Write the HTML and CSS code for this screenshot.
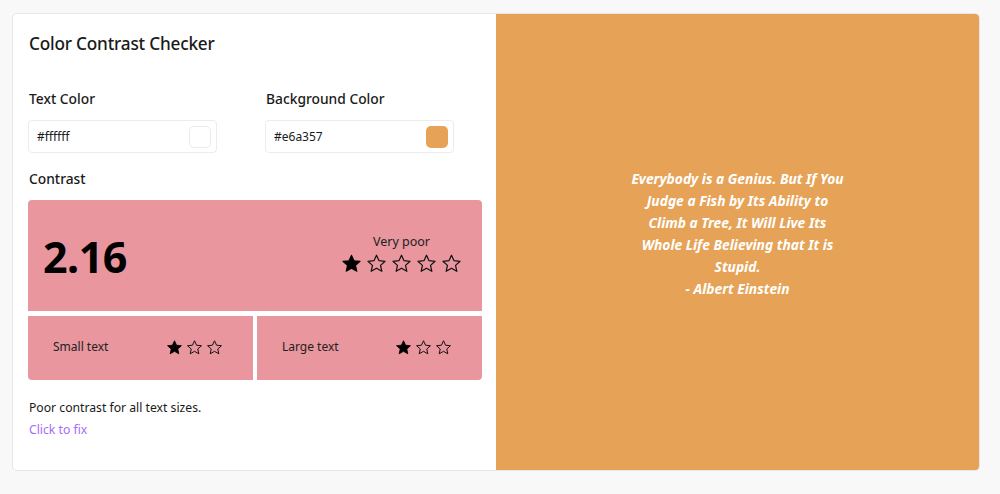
FILE: index.html
```html
<!DOCTYPE html>
<html>
<head>
<meta charset="utf-8">
<link rel="stylesheet" href="styles.css">
</head>
<body>
<div class="card">
  <section class="panel">
    <h1 class="title">Color Contrast Checker</h1>
    <div class="fields">
      <div class="field">
        <label class="label">Text Color</label>
        <div class="input"><span class="val">#ffffff</span><span class="swatch sw-white"></span></div>
      </div>
      <div class="field">
        <label class="label">Background Color</label>
        <div class="input"><span class="val">#e6a357</span><span class="swatch sw-orange"></span></div>
      </div>
    </div>
    <div class="label contrast-label">Contrast</div>
    <div class="score">
      <div class="ratio">2.16</div>
      <div class="rating">
        <div class="rating-text">Very poor</div>
        <div class="stars big">
          <svg viewBox="0 0 24 24"><path class="full" d="M12 2.5l2.9 6.3 6.9.7-5.2 4.6 1.5 6.8L12 17.4l-6.1 3.5 1.5-6.8-5.2-4.6 6.9-.7z"/></svg>
          <svg viewBox="0 0 24 24"><path class="empty" d="M12 2.5l2.9 6.3 6.9.7-5.2 4.6 1.5 6.8L12 17.4l-6.1 3.5 1.5-6.8-5.2-4.6 6.9-.7z"/></svg>
          <svg viewBox="0 0 24 24"><path class="empty" d="M12 2.5l2.9 6.3 6.9.7-5.2 4.6 1.5 6.8L12 17.4l-6.1 3.5 1.5-6.8-5.2-4.6 6.9-.7z"/></svg>
          <svg viewBox="0 0 24 24"><path class="empty" d="M12 2.5l2.9 6.3 6.9.7-5.2 4.6 1.5 6.8L12 17.4l-6.1 3.5 1.5-6.8-5.2-4.6 6.9-.7z"/></svg>
          <svg viewBox="0 0 24 24"><path class="empty" d="M12 2.5l2.9 6.3 6.9.7-5.2 4.6 1.5 6.8L12 17.4l-6.1 3.5 1.5-6.8-5.2-4.6 6.9-.7z"/></svg>
        </div>
      </div>
    </div>
    <div class="sizes">
      <div class="size size-left">
        <span class="size-name">Small text</span>
        <div class="stars small">
          <svg viewBox="0 0 24 24"><path class="full" d="M12 2.5l2.9 6.3 6.9.7-5.2 4.6 1.5 6.8L12 17.4l-6.1 3.5 1.5-6.8-5.2-4.6 6.9-.7z"/></svg>
          <svg viewBox="0 0 24 24"><path class="empty" d="M12 2.5l2.9 6.3 6.9.7-5.2 4.6 1.5 6.8L12 17.4l-6.1 3.5 1.5-6.8-5.2-4.6 6.9-.7z"/></svg>
          <svg viewBox="0 0 24 24"><path class="empty" d="M12 2.5l2.9 6.3 6.9.7-5.2 4.6 1.5 6.8L12 17.4l-6.1 3.5 1.5-6.8-5.2-4.6 6.9-.7z"/></svg>
        </div>
      </div>
      <div class="size size-right">
        <span class="size-name">Large text</span>
        <div class="stars small">
          <svg viewBox="0 0 24 24"><path class="full" d="M12 2.5l2.9 6.3 6.9.7-5.2 4.6 1.5 6.8L12 17.4l-6.1 3.5 1.5-6.8-5.2-4.6 6.9-.7z"/></svg>
          <svg viewBox="0 0 24 24"><path class="empty" d="M12 2.5l2.9 6.3 6.9.7-5.2 4.6 1.5 6.8L12 17.4l-6.1 3.5 1.5-6.8-5.2-4.6 6.9-.7z"/></svg>
          <svg viewBox="0 0 24 24"><path class="empty" d="M12 2.5l2.9 6.3 6.9.7-5.2 4.6 1.5 6.8L12 17.4l-6.1 3.5 1.5-6.8-5.2-4.6 6.9-.7z"/></svg>
        </div>
      </div>
    </div>
    <p class="note">Poor contrast for all text sizes.</p>
    <a class="fix" href="#">Click to fix</a>
  </section>
  <section class="preview">
    <p class="quote">Everybody is a Genius. But If You Judge a Fish by Its Ability to Climb a Tree, It Will Live Its Whole Life Believing that It is Stupid.<br>- Albert Einstein</p>
  </section>
</div>
</body>
</html>
```
FILE: styles.css
```css
* { box-sizing: border-box; }
html, body { margin: 0; padding: 0; }
body {
  background: #f8f8f8;
  font-family: "Noto Sans", "Open Sans", sans-serif;
  color: #1a1a1a;
  padding: 13px 20px 0 12px;
}
.card {
  display: flex;
  height: 458px;
  background: #fff;
  border: 1px solid #e6e6e6;
  border-radius: 5px;
}
.panel {
  width: 483px;
  padding: 17px 14px 0 15px;
}
.title {
  margin: 0 0 0 1px;
  font-size: 17.2px;
  font-weight: 500;
  line-height: 26px;
  letter-spacing: -0.2px;
}
.fields {
  display: flex;
  gap: 48px;
  margin-top: 32px;
}
.field { width: 189px; }
.label {
  display: block;
  font-size: 13.8px;
  font-weight: 500;
  line-height: 20px;
  padding-left: 1px;
}
.input {
  margin-top: 11px;
  height: 33px;
  border: 1px solid #ececec;
  border-radius: 4px;
  display: flex;
  align-items: center;
  justify-content: space-between;
  padding: 0 5px 0 8px;
  font-size: 12px;
}
.swatch {
  width: 22px;
  height: 22px;
  border-radius: 5px;
}
.sw-white { border: 1px solid #ececec; background: #fff; }
.sw-orange { background: #e6a357; }
.contrast-label { margin-top: 16px; }
.score {
  margin-top: 11px;
  height: 111px;
  background: #e9969e;
  border-radius: 4px 4px 0 0;
  display: flex;
  align-items: center;
  justify-content: space-between;
  padding: 0 20px 0 15px;
}
.ratio {
  font-size: 43px;
  font-weight: 700;
  color: #000;
  letter-spacing: -0.5px;
  line-height: 50px;
  margin-top: 2px;
}
.rating {
  display: flex;
  flex-direction: column;
  align-items: center;
  margin-top: -4px;
}
.rating-text { font-size: 12.5px; line-height: 18px; color: #222; }
.stars { display: flex; }
.stars svg { display: block; }
.stars .full { fill: #000; stroke: #000; stroke-width: 1.2; stroke-linejoin: round; }
.stars .empty { fill: none; stroke: #111; stroke-width: 1.4; stroke-linejoin: round; }
.big { gap: 4px; margin-top: 2px; }
.big svg { width: 21px; height: 21px; }
.small { gap: 3px; margin-top: -2px; }
.small svg { width: 17px; height: 17px; }
.sizes {
  display: flex;
  gap: 4px;
  margin-top: 5px;
}
.size {
  flex: 1;
  height: 64px;
  background: #e9969e;
  display: flex;
  align-items: center;
  justify-content: space-between;
  padding: 0 30px 0 25px;
}
.size-left { border-radius: 0 0 0 4px; }
.size-right { border-radius: 0 0 4px 0; }
.size-name { font-size: 12px; color: #222; margin-top: -3px; }
.note {
  margin: 19px 0 0 1px;
  font-size: 12.2px;
  line-height: 18px;
}
.fix {
  display: block;
  margin: 4px 0 0 1px;
  font-size: 12.2px;
  line-height: 18px;
  color: #a66cf8;
  text-decoration: none;
}
.preview {
  flex: 1;
  background: #e6a357;
  border-radius: 0 4px 4px 0;
  display: flex;
  align-items: center;
  justify-content: center;
}
.quote {
  margin: -16px 0 0;
  width: 216px;
  text-align: center;
  color: #fff;
  font-style: italic;
  font-weight: 700;
  font-size: 13.8px;
  line-height: 22px;
}
```
